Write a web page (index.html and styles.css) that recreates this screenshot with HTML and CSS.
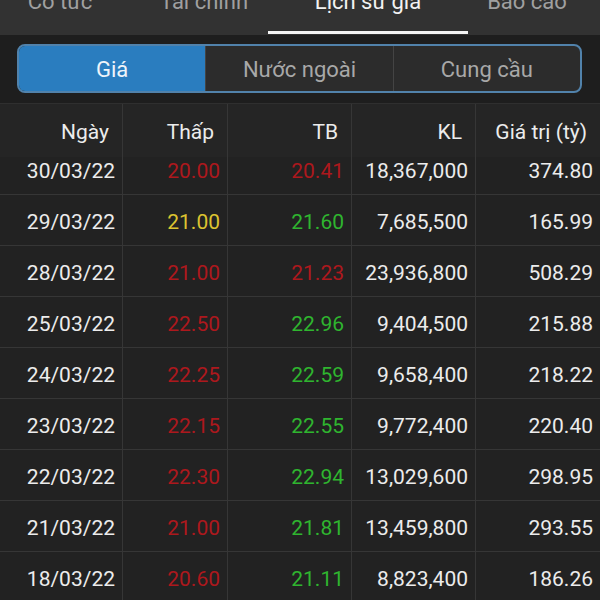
FILE: index.html
```html
<!DOCTYPE html>
<html lang="vi">
<head>
<meta charset="utf-8" />
<title>Lịch sử giá</title>
<link rel="stylesheet" href="styles.css">
</head>
<body>
<div class="tabs">
	<div class="tab t1">Cổ tức</div>
	<div class="tab t2">Tài chính</div>
	<div class="tab t3 on">Lịch sử giá</div>
	<div class="tab t4">Báo cáo</div>
</div>
<div class="filter">
	<div class="seg">
		<div class="seg_item on">Giá</div>
		<div class="seg_item">Nước ngoài</div>
		<div class="seg_item">Cung cầu</div>
	</div>
</div>
<div class="grid">
	<div class="row head">
		<div>Ngày</div><div>Thấp</div><div>TB</div><div>KL</div><div>Giá trị (tỷ)</div>
	</div>
	<div class="body">
		<div class="row first"><div>30/03/22</div><div class="dn">20.00</div><div class="dn">20.41</div><div>18,367,000</div><div>374.80</div></div>
		<div class="row"><div>29/03/22</div><div class="ref">21.00</div><div class="up">21.60</div><div>7,685,500</div><div>165.99</div></div>
		<div class="row"><div>28/03/22</div><div class="dn">21.00</div><div class="dn">21.23</div><div>23,936,800</div><div>508.29</div></div>
		<div class="row"><div>25/03/22</div><div class="dn">22.50</div><div class="up">22.96</div><div>9,404,500</div><div>215.88</div></div>
		<div class="row"><div>24/03/22</div><div class="dn">22.25</div><div class="up">22.59</div><div>9,658,400</div><div>218.22</div></div>
		<div class="row"><div>23/03/22</div><div class="dn">22.15</div><div class="up">22.55</div><div>9,772,400</div><div>220.40</div></div>
		<div class="row"><div>22/03/22</div><div class="dn">22.30</div><div class="up">22.94</div><div>13,029,600</div><div>298.95</div></div>
		<div class="row"><div>21/03/22</div><div class="dn">21.00</div><div class="up">21.81</div><div>13,459,800</div><div>293.55</div></div>
		<div class="row"><div>18/03/22</div><div class="dn">20.60</div><div class="up">21.11</div><div>8,823,400</div><div>186.26</div></div>
	</div>
</div>
</body>
</html>
```
FILE: styles.css
```css
html, body{ margin:0; padding:0; height:600px; overflow:hidden; background:#1e1e1e; }
body{ font-family:Roboto, "Noto Sans", sans-serif; color:#ececec; font-size:21px; }

/* top tabs, scrolled so the labels are half hidden */
.tabs{ display:flex; height:35px; background:#323232; margin-left:-20px; overflow:hidden; font-size:22px; }
.tab{ flex:none; text-align:center; color:#a0a0a0; line-height:24px; margin-top:-10px; position:relative; }
.tab.on{ color:#f2f2f2; }
.tab.on:after{ content:""; position:absolute; left:0; right:0; top:41px; height:3px; background:#f4f4f4; }
.t1{ width:160px; }
.t2{ width:128px; }
.t3{ width:200px; }
.t4{ width:118px; }

.filter{ padding:9px 18px 10px 17px; }
.seg{ display:flex; height:45px; border:2px solid #5182ab; border-radius:8px; overflow:hidden; background:#2c2c2c; font-size:22px; }
.seg_item{ flex:1; display:flex; align-items:center; justify-content:center; color:#a8a8a8; border-left:1px solid #444; padding-top:1px; }
.seg_item.on{ background:#2a7dbf; color:#eef4fa; border-left:0; }

.grid{ border-top:1px solid #2f2f2f; }
.row{ display:grid; grid-template-columns:123px 105px 124px 124px 1fr; border-bottom:1px solid #363636; }
.row > div{ display:flex; align-items:center; justify-content:flex-end; padding:3px 7px 0 0; border-right:1px solid #363636; height:47px; }
.row > div:last-child{ border-right:0; }
.head{ background:#252525; border-bottom:0; }
.head > div{ height:51px; padding:2px 13px 0 0; }
.body{ height:443px; overflow:hidden; background:#222; }
.first{ margin-top:-13px; }
.dn{ color:#ad181d; }
.up{ color:#2fb52f; }
.ref{ color:#dcc330; }
```
